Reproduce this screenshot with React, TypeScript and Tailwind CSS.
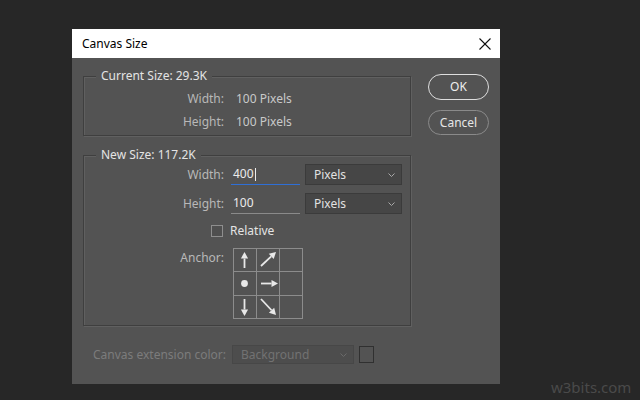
import React from "react";

const font = { fontFamily: '"Noto Sans", "Open Sans", sans-serif' };

function Arrow({ x1, y1, x2, y2 }: { x1: number; y1: number; x2: number; y2: number }) {
  const ang = Math.atan2(y2 - y1, x2 - x1);
  const len = 6.5;
  const w = 3.6;
  const bx = x2 - Math.cos(ang) * len;
  const by = y2 - Math.sin(ang) * len;
  const px = -Math.sin(ang) * w;
  const py = Math.cos(ang) * w;
  return (
    <g>
      <line x1={x1} y1={y1} x2={bx} y2={by} stroke="#e8e8e8" strokeWidth={1.8} />
      <polygon points={`${x2},${y2} ${bx + px},${by + py} ${bx - px},${by - py}`} fill="#e8e8e8" />
    </g>
  );
}

function AnchorGrid() {
  const xs = [0.5, 23.5, 46.5, 69.5];
  const ys = [0.5, 23.5, 47.5, 70.5];
  return (
    <svg width="70" height="71" viewBox="0 0 70 71" className="block">
      {xs.map((x) => (
        <line key={"x" + x} x1={x} y1={0} x2={x} y2={71} stroke="#8c8c8c" strokeWidth={1} />
      ))}
      {ys.map((y) => (
        <line key={"y" + y} x1={0} y1={y} x2={70} y2={y} stroke="#8c8c8c" strokeWidth={1} />
      ))}
      <Arrow x1={11.5} y1={20} x2={11.5} y2={4} />
      <Arrow x1={28} y1={18} x2={43} y2={4} />
      <circle cx={11.5} cy={35.5} r={3.4} fill="#e8e8e8" />
      <Arrow x1={28} y1={35.5} x2={45} y2={35.5} />
      <Arrow x1={11.5} y1={51} x2={11.5} y2={68} />
      <Arrow x1={28} y1={51} x2={43} y2={67} />
    </svg>
  );
}

function Chevron({ color }: { color: string }) {
  return (
    <svg width="7" height="4" viewBox="0 0 7 4">
      <polyline points="0.5,0.5 3.5,3.5 6.5,0.5" fill="none" stroke={color} strokeWidth={1} />
    </svg>
  );
}

function Select({ label }: { label: string }) {
  return (
    <div className="ml-[5px] flex h-[21px] w-[97px] items-center justify-between border border-[#3b3b3b] bg-[#464646] pl-[8px] pr-[6px] text-[12px] text-[#e2e2e2]">
      <span>{label}</span>
      <Chevron color="#a8a8a8" />
    </div>
  );
}

const boxCls =
  "relative border border-[#3f3f3f] shadow-[inset_1px_1px_0_#606060,1px_1px_0_#606060]";

export default function App() {
  return (
    <div className="relative h-[400px] w-[640px] overflow-hidden bg-[#272727]" style={font}>
      <div className="ml-[72px] pt-[29px]">
        <div className="w-[428px] bg-[#535353]">
          {/* Title bar */}
          <div className="flex h-[29px] items-center justify-between bg-white pl-[10px] pr-[9px]">
            <span className="text-[12px] text-black">Canvas Size</span>
            <svg width="12" height="12" viewBox="0 0 12 12">
              <line x1="0.5" y1="0.5" x2="11.5" y2="11.5" stroke="#111" strokeWidth={1.1} />
              <line x1="11.5" y1="0.5" x2="0.5" y2="11.5" stroke="#111" strokeWidth={1.1} />
            </svg>
          </div>
          {/* Body */}
          <div className="h-[326px] pl-[11px] pt-[16px]">
            <div className="flex">
              <div className="w-[328px]">
                {/* Current Size */}
                <div className={boxCls + " mt-[2px] h-[60px]"}>
                  <span className="absolute left-[12px] top-[-10px] bg-[#535353] px-[5px] text-[12px] leading-[18px] text-[#e4e4e4]">
                    Current Size: 29.3K
                  </span>
                  <div className="pt-[10px] text-[12px]">
                    <div className="flex h-[23px] items-center">
                      <span className="w-[140px] text-right text-[#b8b8b8]">Width:</span>
                      <span className="ml-[12px] text-[#c9c9c9]">100 Pixels</span>
                    </div>
                    <div className="flex h-[23px] items-center">
                      <span className="w-[140px] text-right text-[#b8b8b8]">Height:</span>
                      <span className="ml-[12px] text-[#c9c9c9]">100 Pixels</span>
                    </div>
                  </div>
                </div>
                {/* New Size */}
                <div className={boxCls + " mt-[19px] h-[171px]"}>
                  <span className="absolute left-[12px] top-[-10px] bg-[#535353] px-[5px] text-[12px] leading-[18px] text-[#e4e4e4]">
                    New Size: 117.2K
                  </span>
                  <div className="pt-[8px] text-[12px]">
                    <div className="flex h-[21px] items-center">
                      <span className="w-[140px] text-right text-[#b8b8b8]">Width:</span>
                      <div className="ml-[7px] flex h-[21px] w-[69px] items-center border-b border-[#2f6fd6] pl-[2px] text-[#ececec]">
                        400<span className="ml-[1px] inline-block h-[13px] w-px bg-[#ececec]" />
                      </div>
                      <Select label="Pixels" />
                    </div>
                    <div className="mt-[8px] flex h-[21px] items-center">
                      <span className="w-[140px] text-right text-[#b8b8b8]">Height:</span>
                      <div className="ml-[7px] flex h-[21px] w-[69px] items-center border-b border-[#8a8a8a] pl-[2px] text-[#ececec]">
                        100
                      </div>
                      <Select label="Pixels" />
                    </div>
                    <div className="mt-[8px] flex h-[18px] items-center pl-[127px]">
                      <span className="h-[12px] w-[12px] border border-[#8e8e8e] bg-[#4f4f4f]" />
                      <span className="ml-[7px] text-[#e4e4e4]">Relative</span>
                    </div>
                    <div className="mt-[8px] flex items-start">
                      <span className="mt-[1px] w-[140px] text-right text-[#b8b8b8]">Anchor:</span>
                      <div className="ml-[9px]">
                        <AnchorGrid />
                      </div>
                    </div>
                  </div>
                </div>
              </div>
              {/* Buttons */}
              <div className="ml-[17px] flex w-[61px] flex-col">
                <div className="flex h-[26px] items-center justify-center rounded-full border-[1.5px] border-[#dedede] text-[12px] text-[#eeeeee]">
                  OK
                </div>
                <div className="mt-[10px] flex h-[25px] items-center justify-center rounded-full border border-[#8a8a8a] text-[12px] text-[#e6e6e6]">
                  Cancel
                </div>
              </div>
            </div>
            {/* Bottom row */}
            <div className="mt-[19px] flex h-[19px] items-center pl-[10px] text-[12px]">
              <span className="w-[139px] shrink-0 whitespace-nowrap text-[#7c7c7c]">Canvas extension color:</span>
              <div className="flex h-[19px] w-[122px] shrink-0 items-center justify-between border border-[#474747] bg-[#4d4d4d] pl-[8px] pr-[6px] text-[#727272]">
                <span>Background</span>
                <Chevron color="#6a6a6a" />
              </div>
              <span className="ml-[5px] h-[17px] w-[15px] shrink-0 border border-[#303030]" />
            </div>
          </div>
        </div>
      </div>
      <span className="absolute left-[551px] top-[376px] text-[15px] text-[#4a4a4a]">w3bits.com</span>
    </div>
  );
}
